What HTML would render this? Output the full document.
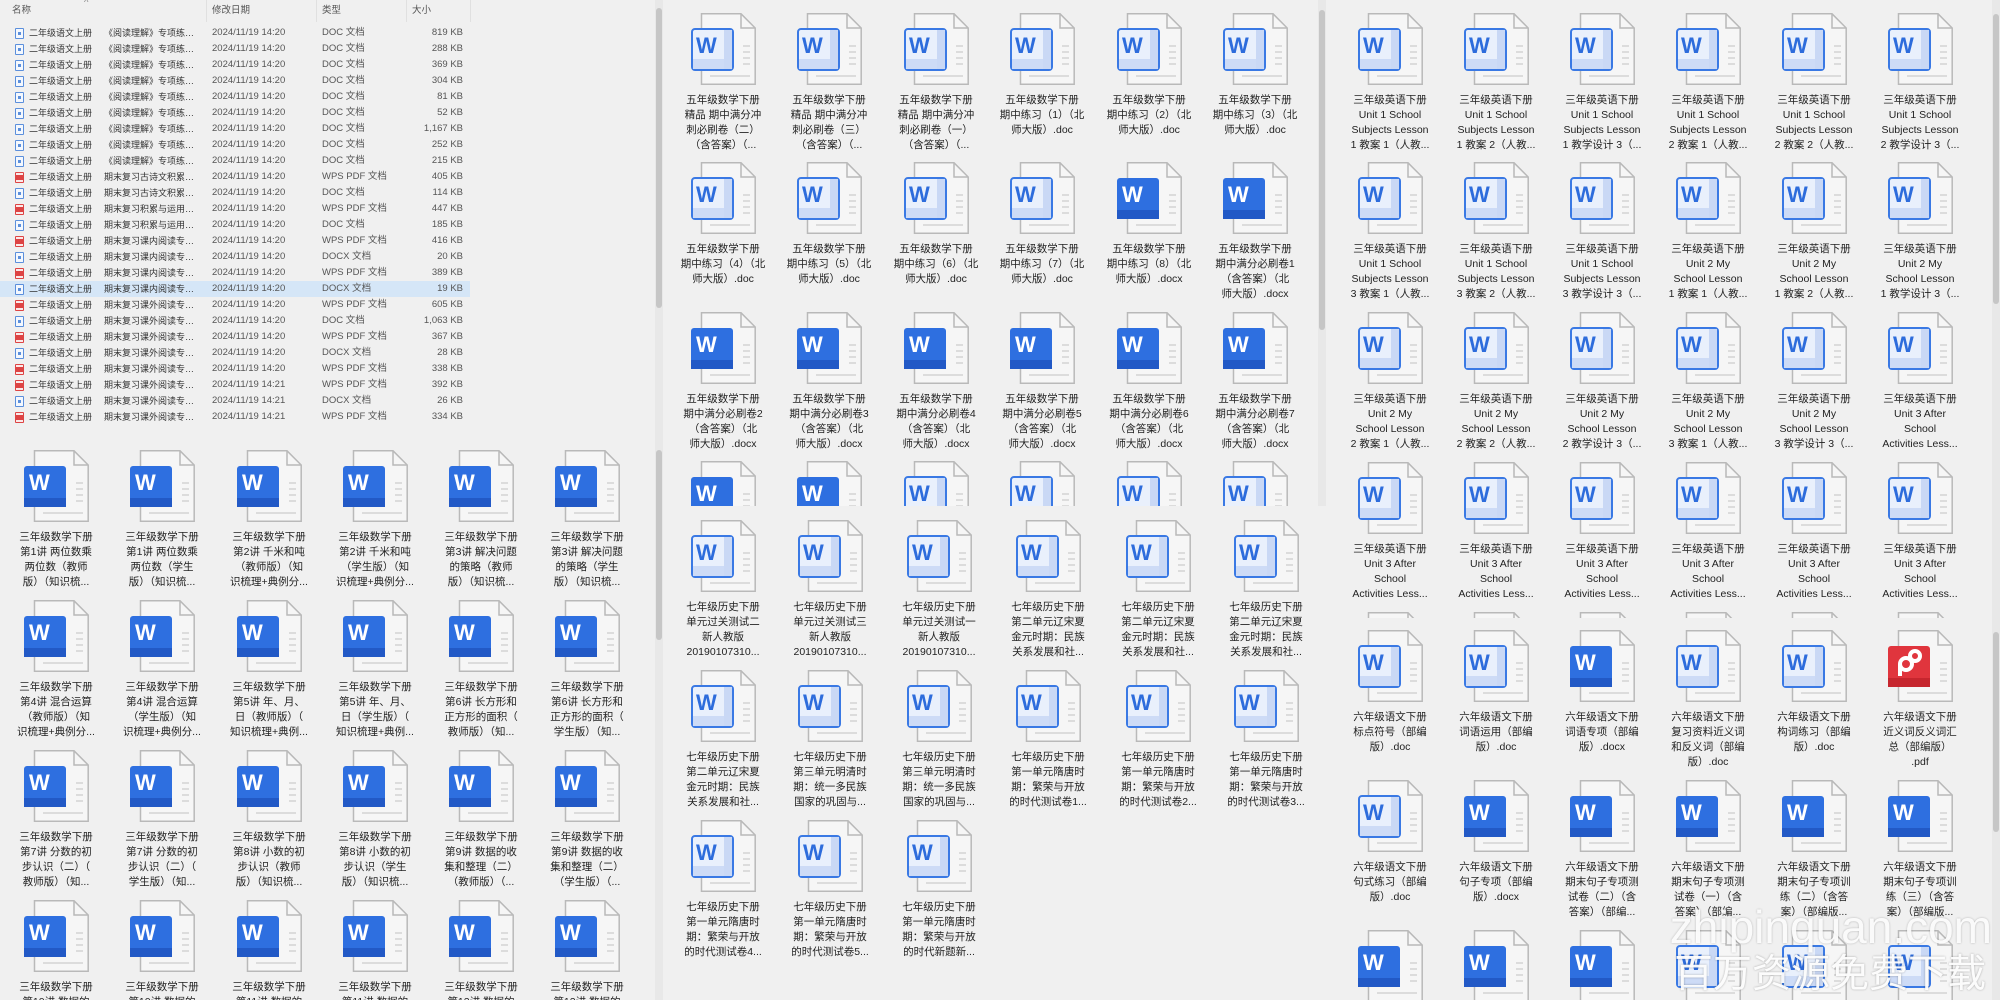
<!DOCTYPE html>
<html><head><meta charset="utf-8">
<style>
body{margin:0;width:2000px;height:1000px;background:#f0f0f0;font-family:"Liberation Sans","Noto Sans CJK SC",sans-serif;position:relative;overflow:hidden}
.pane{position:absolute;overflow:hidden;background:#f0f0f0}
.t{position:absolute;width:96px;text-align:center;font-size:10.5px;line-height:15px;color:#222}
.t svg{display:block;width:65px;height:72px;margin:0 auto 8px}
.t p{margin:0;white-space:nowrap}
.r{position:absolute;left:0;width:470px;height:16px;font-size:9.5px;line-height:16px;color:#555;white-space:nowrap}
.r span{position:absolute}
.r .n{left:29px;color:#333;font-size:9px}
.r .n2{left:104px;width:96px;overflow:hidden;text-overflow:ellipsis;color:#333;font-size:9px}
.r .d{left:212px}
.r .y{left:322px}
.r .s{right:7px}
.r i{position:absolute;left:15px;top:3px;width:7px;height:9px;border:1px solid #5b8fdc;border-radius:1px;background:#f4f8fe}
.r i:after{content:"";position:absolute;left:2px;top:3px;width:3px;height:3px;background:#5b8fdc}
.r i.p{border-color:#d44;background:#fbe9e9}
.r i.p:after{background:#d44;left:0;top:2px;width:7px;height:5px}
.sb{position:absolute;width:8px;background:#e8e8e8}
.th{position:absolute;left:1px;width:6px;background:#c6c6c6;border-radius:3px}
.hd{position:absolute;top:0;height:22px;font-size:9.5px;line-height:22px;color:#555}
.vl{position:absolute;top:0;width:1px;height:22px;background:#e0e0e0}
</style></head><body>
<svg width="0" height="0" style="position:absolute">
<defs>
<g id="pg">
<path d="M10.5 0.8H50L64.2 15V71.2H10.5Z" fill="#f6f6f6" stroke="#b9b9b9" stroke-width="1.5"/>
<path d="M50 0.8V15H64.2" fill="none" stroke="#b9b9b9" stroke-width="1.5"/>
<path d="M52 33H59M52 39H59M52 45H59M52 51H59M19 63H59" stroke="#dcdcdc" stroke-width="2"/>
</g>
<symbol id="wl" viewBox="0 0 65 72"><use href="#pg"/>
<rect x="1" y="16" width="41" height="41" rx="3" fill="#e9f0fc" stroke="#3a79e4" stroke-width="2"/>
<rect x="2" y="46" width="39" height="10" fill="#cddbf6"/>
<rect x="33" y="17" width="8" height="39" fill="#c9d8f5"/>
<text x="5" y="40" font-family="Liberation Sans" font-weight="bold" font-size="22" fill="#2d6cdc">W</text>
</symbol>
<symbol id="wd" viewBox="0 0 65 72"><use href="#pg"/>
<rect x="0" y="16" width="42" height="41" rx="3" fill="#2e6fe0"/>
<rect x="0" y="48" width="42" height="9" fill="#2259c6"/>
<text x="5" y="40" font-family="Liberation Sans" font-weight="bold" font-size="22" fill="#fff">W</text>
</symbol>
<symbol id="pd" viewBox="0 0 65 72"><use href="#pg"/>
<rect x="0" y="16" width="42" height="41" rx="3" fill="#e0353d"/>
<rect x="0" y="48" width="42" height="9" fill="#c6262e"/>
<circle cx="18" cy="34" r="6" fill="none" stroke="#fff" stroke-width="4"/>
<circle cx="27" cy="26" r="5" fill="none" stroke="#fff" stroke-width="4"/>
<path d="M12 34V46" stroke="#fff" stroke-width="4"/>
</symbol>
</defs></svg>

<!-- P1 list -->
<div class="pane" style="left:0;top:0;width:663px;height:442px">
<div class="hd" style="left:12px">名称</div><div class="hd" style="left:84px;top:-8px;color:#888">^</div>
<div class="hd" style="left:212px">修改日期</div><div class="hd" style="left:322px">类型</div><div class="hd" style="left:412px">大小</div>
<div class="vl" style="left:206px"></div><div class="vl" style="left:316px"></div><div class="vl" style="left:406px"></div><div class="vl" style="left:470px"></div>
<div class="r" style="top:25px"><i></i><span class="n">二年级语文上册</span><span class="n2">《阅读理解》专项练习...</span><span class="d">2024/11/19 14:20</span><span class="y">DOC 文档</span><span class="s">819 KB</span></div>
<div class="r" style="top:41px"><i></i><span class="n">二年级语文上册</span><span class="n2">《阅读理解》专项练习...</span><span class="d">2024/11/19 14:20</span><span class="y">DOC 文档</span><span class="s">288 KB</span></div>
<div class="r" style="top:57px"><i></i><span class="n">二年级语文上册</span><span class="n2">《阅读理解》专项练习...</span><span class="d">2024/11/19 14:20</span><span class="y">DOC 文档</span><span class="s">369 KB</span></div>
<div class="r" style="top:73px"><i></i><span class="n">二年级语文上册</span><span class="n2">《阅读理解》专项练习...</span><span class="d">2024/11/19 14:20</span><span class="y">DOC 文档</span><span class="s">304 KB</span></div>
<div class="r" style="top:89px"><i></i><span class="n">二年级语文上册</span><span class="n2">《阅读理解》专项练习...</span><span class="d">2024/11/19 14:20</span><span class="y">DOC 文档</span><span class="s">81 KB</span></div>
<div class="r" style="top:105px"><i></i><span class="n">二年级语文上册</span><span class="n2">《阅读理解》专项练习...</span><span class="d">2024/11/19 14:20</span><span class="y">DOC 文档</span><span class="s">52 KB</span></div>
<div class="r" style="top:121px"><i></i><span class="n">二年级语文上册</span><span class="n2">《阅读理解》专项练习...</span><span class="d">2024/11/19 14:20</span><span class="y">DOC 文档</span><span class="s">1,167 KB</span></div>
<div class="r" style="top:137px"><i></i><span class="n">二年级语文上册</span><span class="n2">《阅读理解》专项练习...</span><span class="d">2024/11/19 14:20</span><span class="y">DOC 文档</span><span class="s">252 KB</span></div>
<div class="r" style="top:153px"><i></i><span class="n">二年级语文上册</span><span class="n2">《阅读理解》专项练习...</span><span class="d">2024/11/19 14:20</span><span class="y">DOC 文档</span><span class="s">215 KB</span></div>
<div class="r" style="top:169px"><i class="p"></i><span class="n">二年级语文上册</span><span class="n2">期末复习古诗文积累专...</span><span class="d">2024/11/19 14:20</span><span class="y">WPS PDF 文档</span><span class="s">405 KB</span></div>
<div class="r" style="top:185px"><i></i><span class="n">二年级语文上册</span><span class="n2">期末复习古诗文积累专...</span><span class="d">2024/11/19 14:20</span><span class="y">DOC 文档</span><span class="s">114 KB</span></div>
<div class="r" style="top:201px"><i class="p"></i><span class="n">二年级语文上册</span><span class="n2">期末复习积累与运用专...</span><span class="d">2024/11/19 14:20</span><span class="y">WPS PDF 文档</span><span class="s">447 KB</span></div>
<div class="r" style="top:217px"><i></i><span class="n">二年级语文上册</span><span class="n2">期末复习积累与运用专...</span><span class="d">2024/11/19 14:20</span><span class="y">DOC 文档</span><span class="s">185 KB</span></div>
<div class="r" style="top:233px"><i class="p"></i><span class="n">二年级语文上册</span><span class="n2">期末复习课内阅读专项...</span><span class="d">2024/11/19 14:20</span><span class="y">WPS PDF 文档</span><span class="s">416 KB</span></div>
<div class="r" style="top:249px"><i></i><span class="n">二年级语文上册</span><span class="n2">期末复习课内阅读专项...</span><span class="d">2024/11/19 14:20</span><span class="y">DOCX 文档</span><span class="s">20 KB</span></div>
<div class="r" style="top:265px"><i class="p"></i><span class="n">二年级语文上册</span><span class="n2">期末复习课内阅读专项...</span><span class="d">2024/11/19 14:20</span><span class="y">WPS PDF 文档</span><span class="s">389 KB</span></div>
<div class="r" style="top:281px;background:#d5e6f7"><i></i><span class="n">二年级语文上册</span><span class="n2">期末复习课内阅读专项...</span><span class="d">2024/11/19 14:20</span><span class="y">DOCX 文档</span><span class="s">19 KB</span></div>
<div class="r" style="top:297px"><i class="p"></i><span class="n">二年级语文上册</span><span class="n2">期末复习课外阅读专项...</span><span class="d">2024/11/19 14:20</span><span class="y">WPS PDF 文档</span><span class="s">605 KB</span></div>
<div class="r" style="top:313px"><i></i><span class="n">二年级语文上册</span><span class="n2">期末复习课外阅读专项...</span><span class="d">2024/11/19 14:20</span><span class="y">DOC 文档</span><span class="s">1,063 KB</span></div>
<div class="r" style="top:329px"><i class="p"></i><span class="n">二年级语文上册</span><span class="n2">期末复习课外阅读专项...</span><span class="d">2024/11/19 14:20</span><span class="y">WPS PDF 文档</span><span class="s">367 KB</span></div>
<div class="r" style="top:345px"><i></i><span class="n">二年级语文上册</span><span class="n2">期末复习课外阅读专项...</span><span class="d">2024/11/19 14:20</span><span class="y">DOCX 文档</span><span class="s">28 KB</span></div>
<div class="r" style="top:361px"><i class="p"></i><span class="n">二年级语文上册</span><span class="n2">期末复习课外阅读专项...</span><span class="d">2024/11/19 14:20</span><span class="y">WPS PDF 文档</span><span class="s">338 KB</span></div>
<div class="r" style="top:377px"><i class="p"></i><span class="n">二年级语文上册</span><span class="n2">期末复习课外阅读专项...</span><span class="d">2024/11/19 14:21</span><span class="y">WPS PDF 文档</span><span class="s">392 KB</span></div>
<div class="r" style="top:393px"><i></i><span class="n">二年级语文上册</span><span class="n2">期末复习课外阅读专项...</span><span class="d">2024/11/19 14:21</span><span class="y">DOCX 文档</span><span class="s">26 KB</span></div>
<div class="r" style="top:409px"><i class="p"></i><span class="n">二年级语文上册</span><span class="n2">期末复习课外阅读专项...</span><span class="d">2024/11/19 14:21</span><span class="y">WPS PDF 文档</span><span class="s">334 KB</span></div>
<div class="sb" style="left:655px;top:0;height:442px"><div class="th" style="top:8px;height:300px"></div></div>
</div>

<!-- P2 left grid -->
<div class="pane" style="left:0;top:442px;width:663px;height:558px">
<div class="t" style="left:8px;top:8px"><svg><use href="#wd"/></svg><p>三年级数学下册<br>第1讲 两位数乘<br>两位数（教师<br>版）（知识梳...</p></div>
<div class="t" style="left:114px;top:8px"><svg><use href="#wd"/></svg><p>三年级数学下册<br>第1讲 两位数乘<br>两位数（学生<br>版）（知识梳...</p></div>
<div class="t" style="left:221px;top:8px"><svg><use href="#wd"/></svg><p>三年级数学下册<br>第2讲 千米和吨<br>（教师版）（知<br>识梳理+典例分...</p></div>
<div class="t" style="left:327px;top:8px"><svg><use href="#wd"/></svg><p>三年级数学下册<br>第2讲 千米和吨<br>（学生版）（知<br>识梳理+典例分...</p></div>
<div class="t" style="left:433px;top:8px"><svg><use href="#wd"/></svg><p>三年级数学下册<br>第3讲 解决问题<br>的策略（教师<br>版）（知识梳...</p></div>
<div class="t" style="left:539px;top:8px"><svg><use href="#wd"/></svg><p>三年级数学下册<br>第3讲 解决问题<br>的策略（学生<br>版）（知识梳...</p></div>
<div class="t" style="left:8px;top:158px"><svg><use href="#wd"/></svg><p>三年级数学下册<br>第4讲 混合运算<br>（教师版）（知<br>识梳理+典例分...</p></div>
<div class="t" style="left:114px;top:158px"><svg><use href="#wd"/></svg><p>三年级数学下册<br>第4讲 混合运算<br>（学生版）（知<br>识梳理+典例分...</p></div>
<div class="t" style="left:221px;top:158px"><svg><use href="#wd"/></svg><p>三年级数学下册<br>第5讲 年、月、<br>日（教师版）（<br>知识梳理+典例...</p></div>
<div class="t" style="left:327px;top:158px"><svg><use href="#wd"/></svg><p>三年级数学下册<br>第5讲 年、月、<br>日（学生版）（<br>知识梳理+典例...</p></div>
<div class="t" style="left:433px;top:158px"><svg><use href="#wd"/></svg><p>三年级数学下册<br>第6讲 长方形和<br>正方形的面积（<br>教师版）（知...</p></div>
<div class="t" style="left:539px;top:158px"><svg><use href="#wd"/></svg><p>三年级数学下册<br>第6讲 长方形和<br>正方形的面积（<br>学生版）（知...</p></div>
<div class="t" style="left:8px;top:308px"><svg><use href="#wd"/></svg><p>三年级数学下册<br>第7讲 分数的初<br>步认识（二）（<br>教师版）（知...</p></div>
<div class="t" style="left:114px;top:308px"><svg><use href="#wd"/></svg><p>三年级数学下册<br>第7讲 分数的初<br>步认识（二）（<br>学生版）（知...</p></div>
<div class="t" style="left:221px;top:308px"><svg><use href="#wd"/></svg><p>三年级数学下册<br>第8讲 小数的初<br>步认识（教师<br>版）（知识梳...</p></div>
<div class="t" style="left:327px;top:308px"><svg><use href="#wd"/></svg><p>三年级数学下册<br>第8讲 小数的初<br>步认识（学生<br>版）（知识梳...</p></div>
<div class="t" style="left:433px;top:308px"><svg><use href="#wd"/></svg><p>三年级数学下册<br>第9讲 数据的收<br>集和整理（二）<br>（教师版）（...</p></div>
<div class="t" style="left:539px;top:308px"><svg><use href="#wd"/></svg><p>三年级数学下册<br>第9讲 数据的收<br>集和整理（二）<br>（学生版）（...</p></div>
<div class="t" style="left:8px;top:458px"><svg><use href="#wd"/></svg><p>三年级数学下册<br>第10讲 数据的</p></div>
<div class="t" style="left:114px;top:458px"><svg><use href="#wd"/></svg><p>三年级数学下册<br>第10讲 数据的</p></div>
<div class="t" style="left:221px;top:458px"><svg><use href="#wd"/></svg><p>三年级数学下册<br>第11讲 数据的</p></div>
<div class="t" style="left:327px;top:458px"><svg><use href="#wd"/></svg><p>三年级数学下册<br>第11讲 数据的</p></div>
<div class="t" style="left:433px;top:458px"><svg><use href="#wd"/></svg><p>三年级数学下册<br>第12讲 数据的</p></div>
<div class="t" style="left:539px;top:458px"><svg><use href="#wd"/></svg><p>三年级数学下册<br>第12讲 数据的</p></div>
<div class="sb" style="left:655px;top:0;height:558px"><div class="th" style="top:8px;height:190px"></div></div>
</div>

<!-- P3 middle top -->
<div class="pane" style="left:663px;top:0;width:663px;height:506px">
<div class="t" style="left:12px;top:13px"><svg><use href="#wl"/></svg><p>五年级数学下册<br>精品 期中满分冲<br>刺必刷卷（二）<br>（含答案）（...</p></div>
<div class="t" style="left:118px;top:13px"><svg><use href="#wl"/></svg><p>五年级数学下册<br>精品 期中满分冲<br>刺必刷卷（三）<br>（含答案）（...</p></div>
<div class="t" style="left:225px;top:13px"><svg><use href="#wl"/></svg><p>五年级数学下册<br>精品 期中满分冲<br>刺必刷卷（一）<br>（含答案）（...</p></div>
<div class="t" style="left:331px;top:13px"><svg><use href="#wl"/></svg><p>五年级数学下册<br>期中练习（1）（北<br>师大版）.doc</p></div>
<div class="t" style="left:438px;top:13px"><svg><use href="#wl"/></svg><p>五年级数学下册<br>期中练习（2）（北<br>师大版）.doc</p></div>
<div class="t" style="left:544px;top:13px"><svg><use href="#wl"/></svg><p>五年级数学下册<br>期中练习（3）（北<br>师大版）.doc</p></div>
<div class="t" style="left:12px;top:162px"><svg><use href="#wl"/></svg><p>五年级数学下册<br>期中练习（4）（北<br>师大版）.doc</p></div>
<div class="t" style="left:118px;top:162px"><svg><use href="#wl"/></svg><p>五年级数学下册<br>期中练习（5）（北<br>师大版）.doc</p></div>
<div class="t" style="left:225px;top:162px"><svg><use href="#wl"/></svg><p>五年级数学下册<br>期中练习（6）（北<br>师大版）.doc</p></div>
<div class="t" style="left:331px;top:162px"><svg><use href="#wl"/></svg><p>五年级数学下册<br>期中练习（7）（北<br>师大版）.doc</p></div>
<div class="t" style="left:438px;top:162px"><svg><use href="#wd"/></svg><p>五年级数学下册<br>期中练习（8）（北<br>师大版）.docx</p></div>
<div class="t" style="left:544px;top:162px"><svg><use href="#wd"/></svg><p>五年级数学下册<br>期中满分必刷卷1<br>（含答案）（北<br>师大版）.docx</p></div>
<div class="t" style="left:12px;top:312px"><svg><use href="#wd"/></svg><p>五年级数学下册<br>期中满分必刷卷2<br>（含答案）（北<br>师大版）.docx</p></div>
<div class="t" style="left:118px;top:312px"><svg><use href="#wd"/></svg><p>五年级数学下册<br>期中满分必刷卷3<br>（含答案）（北<br>师大版）.docx</p></div>
<div class="t" style="left:225px;top:312px"><svg><use href="#wd"/></svg><p>五年级数学下册<br>期中满分必刷卷4<br>（含答案）（北<br>师大版）.docx</p></div>
<div class="t" style="left:331px;top:312px"><svg><use href="#wd"/></svg><p>五年级数学下册<br>期中满分必刷卷5<br>（含答案）（北<br>师大版）.docx</p></div>
<div class="t" style="left:438px;top:312px"><svg><use href="#wd"/></svg><p>五年级数学下册<br>期中满分必刷卷6<br>（含答案）（北<br>师大版）.docx</p></div>
<div class="t" style="left:544px;top:312px"><svg><use href="#wd"/></svg><p>五年级数学下册<br>期中满分必刷卷7<br>（含答案）（北<br>师大版）.docx</p></div>
<div class="t" style="left:12px;top:461px"><svg><use href="#wd"/></svg></div>
<div class="t" style="left:118px;top:461px"><svg><use href="#wd"/></svg></div>
<div class="t" style="left:225px;top:461px"><svg><use href="#wl"/></svg></div>
<div class="t" style="left:331px;top:461px"><svg><use href="#wl"/></svg></div>
<div class="t" style="left:438px;top:461px"><svg><use href="#wl"/></svg></div>
<div class="t" style="left:544px;top:461px"><svg><use href="#wl"/></svg></div>
<div class="sb" style="left:655px;top:0;height:506px"><div class="th" style="top:10px;height:320px"></div></div>
</div>

<!-- P4 middle bottom -->
<div class="pane" style="left:663px;top:506px;width:663px;height:494px">
<div class="t" style="left:12px;top:14px"><svg><use href="#wl"/></svg><p>七年级历史下册<br>单元过关测试二<br>新人教版<br>20190107310...</p></div>
<div class="t" style="left:119px;top:14px"><svg><use href="#wl"/></svg><p>七年级历史下册<br>单元过关测试三<br>新人教版<br>20190107310...</p></div>
<div class="t" style="left:228px;top:14px"><svg><use href="#wl"/></svg><p>七年级历史下册<br>单元过关测试一<br>新人教版<br>20190107310...</p></div>
<div class="t" style="left:337px;top:14px"><svg><use href="#wl"/></svg><p>七年级历史下册<br>第二单元辽宋夏<br>金元时期：民族<br>关系发展和社...</p></div>
<div class="t" style="left:447px;top:14px"><svg><use href="#wl"/></svg><p>七年级历史下册<br>第二单元辽宋夏<br>金元时期：民族<br>关系发展和社...</p></div>
<div class="t" style="left:555px;top:14px"><svg><use href="#wl"/></svg><p>七年级历史下册<br>第二单元辽宋夏<br>金元时期：民族<br>关系发展和社...</p></div>
<div class="t" style="left:12px;top:164px"><svg><use href="#wl"/></svg><p>七年级历史下册<br>第二单元辽宋夏<br>金元时期：民族<br>关系发展和社...</p></div>
<div class="t" style="left:119px;top:164px"><svg><use href="#wl"/></svg><p>七年级历史下册<br>第三单元明清时<br>期：统一多民族<br>国家的巩固与...</p></div>
<div class="t" style="left:228px;top:164px"><svg><use href="#wl"/></svg><p>七年级历史下册<br>第三单元明清时<br>期：统一多民族<br>国家的巩固与...</p></div>
<div class="t" style="left:337px;top:164px"><svg><use href="#wl"/></svg><p>七年级历史下册<br>第一单元隋唐时<br>期：繁荣与开放<br>的时代测试卷1...</p></div>
<div class="t" style="left:447px;top:164px"><svg><use href="#wl"/></svg><p>七年级历史下册<br>第一单元隋唐时<br>期：繁荣与开放<br>的时代测试卷2...</p></div>
<div class="t" style="left:555px;top:164px"><svg><use href="#wl"/></svg><p>七年级历史下册<br>第一单元隋唐时<br>期：繁荣与开放<br>的时代测试卷3...</p></div>
<div class="t" style="left:12px;top:314px"><svg><use href="#wl"/></svg><p>七年级历史下册<br>第一单元隋唐时<br>期：繁荣与开放<br>的时代测试卷4...</p></div>
<div class="t" style="left:119px;top:314px"><svg><use href="#wl"/></svg><p>七年级历史下册<br>第一单元隋唐时<br>期：繁荣与开放<br>的时代测试卷5...</p></div>
<div class="t" style="left:228px;top:314px"><svg><use href="#wl"/></svg><p>七年级历史下册<br>第一单元隋唐时<br>期：繁荣与开放<br>的时代新题新...</p></div>
</div>

<!-- P5 right top -->
<div class="pane" style="left:1326px;top:0;width:674px;height:618px">
<div class="t" style="left:16px;top:13px"><svg><use href="#wl"/></svg><p>三年级英语下册<br>Unit 1 School<br>Subjects Lesson<br>1 教案 1（人教...</p></div>
<div class="t" style="left:122px;top:13px"><svg><use href="#wl"/></svg><p>三年级英语下册<br>Unit 1 School<br>Subjects Lesson<br>1 教案 2（人教...</p></div>
<div class="t" style="left:228px;top:13px"><svg><use href="#wl"/></svg><p>三年级英语下册<br>Unit 1 School<br>Subjects Lesson<br>1 教学设计 3（...</p></div>
<div class="t" style="left:334px;top:13px"><svg><use href="#wl"/></svg><p>三年级英语下册<br>Unit 1 School<br>Subjects Lesson<br>2 教案 1（人教...</p></div>
<div class="t" style="left:440px;top:13px"><svg><use href="#wl"/></svg><p>三年级英语下册<br>Unit 1 School<br>Subjects Lesson<br>2 教案 2（人教...</p></div>
<div class="t" style="left:546px;top:13px"><svg><use href="#wl"/></svg><p>三年级英语下册<br>Unit 1 School<br>Subjects Lesson<br>2 教学设计 3（...</p></div>
<div class="t" style="left:16px;top:162px"><svg><use href="#wl"/></svg><p>三年级英语下册<br>Unit 1 School<br>Subjects Lesson<br>3 教案 1（人教...</p></div>
<div class="t" style="left:122px;top:162px"><svg><use href="#wl"/></svg><p>三年级英语下册<br>Unit 1 School<br>Subjects Lesson<br>3 教案 2（人教...</p></div>
<div class="t" style="left:228px;top:162px"><svg><use href="#wl"/></svg><p>三年级英语下册<br>Unit 1 School<br>Subjects Lesson<br>3 教学设计 3（...</p></div>
<div class="t" style="left:334px;top:162px"><svg><use href="#wl"/></svg><p>三年级英语下册<br>Unit 2 My<br>School Lesson<br>1 教案 1（人教...</p></div>
<div class="t" style="left:440px;top:162px"><svg><use href="#wl"/></svg><p>三年级英语下册<br>Unit 2 My<br>School Lesson<br>1 教案 2（人教...</p></div>
<div class="t" style="left:546px;top:162px"><svg><use href="#wl"/></svg><p>三年级英语下册<br>Unit 2 My<br>School Lesson<br>1 教学设计 3（...</p></div>
<div class="t" style="left:16px;top:312px"><svg><use href="#wl"/></svg><p>三年级英语下册<br>Unit 2 My<br>School Lesson<br>2 教案 1（人教...</p></div>
<div class="t" style="left:122px;top:312px"><svg><use href="#wl"/></svg><p>三年级英语下册<br>Unit 2 My<br>School Lesson<br>2 教案 2（人教...</p></div>
<div class="t" style="left:228px;top:312px"><svg><use href="#wl"/></svg><p>三年级英语下册<br>Unit 2 My<br>School Lesson<br>2 教学设计 3（...</p></div>
<div class="t" style="left:334px;top:312px"><svg><use href="#wl"/></svg><p>三年级英语下册<br>Unit 2 My<br>School Lesson<br>3 教案 1（人教...</p></div>
<div class="t" style="left:440px;top:312px"><svg><use href="#wl"/></svg><p>三年级英语下册<br>Unit 2 My<br>School Lesson<br>3 教学设计 3（...</p></div>
<div class="t" style="left:546px;top:312px"><svg><use href="#wl"/></svg><p>三年级英语下册<br>Unit 3 After<br>School<br>Activities Less...</p></div>
<div class="t" style="left:16px;top:462px"><svg><use href="#wl"/></svg><p>三年级英语下册<br>Unit 3 After<br>School<br>Activities Less...</p></div>
<div class="t" style="left:122px;top:462px"><svg><use href="#wl"/></svg><p>三年级英语下册<br>Unit 3 After<br>School<br>Activities Less...</p></div>
<div class="t" style="left:228px;top:462px"><svg><use href="#wl"/></svg><p>三年级英语下册<br>Unit 3 After<br>School<br>Activities Less...</p></div>
<div class="t" style="left:334px;top:462px"><svg><use href="#wl"/></svg><p>三年级英语下册<br>Unit 3 After<br>School<br>Activities Less...</p></div>
<div class="t" style="left:440px;top:462px"><svg><use href="#wl"/></svg><p>三年级英语下册<br>Unit 3 After<br>School<br>Activities Less...</p></div>
<div class="t" style="left:546px;top:462px"><svg><use href="#wl"/></svg><p>三年级英语下册<br>Unit 3 After<br>School<br>Activities Less...</p></div>
<div class="t" style="left:16px;top:612px"><svg><use href="#wl"/></svg></div>
<div class="t" style="left:122px;top:612px"><svg><use href="#wl"/></svg></div>
<div class="t" style="left:228px;top:612px"><svg><use href="#wl"/></svg></div>
<div class="t" style="left:334px;top:612px"><svg><use href="#wl"/></svg></div>
<div class="t" style="left:440px;top:612px"><svg><use href="#wl"/></svg></div>
<div class="t" style="left:546px;top:612px"><svg><use href="#wl"/></svg></div>
<div class="sb" style="left:666px;top:0;height:618px"><div class="th" style="top:14px;height:290px"></div></div>
</div>

<!-- P6 right bottom -->
<div class="pane" style="left:1326px;top:618px;width:674px;height:382px">
<div class="t" style="left:16px;top:12px"><svg><use href="#wl"/></svg><p>六年级语文下册<br>标点符号（部编<br>版）.doc</p></div>
<div class="t" style="left:122px;top:12px"><svg><use href="#wl"/></svg><p>六年级语文下册<br>词语运用（部编<br>版）.doc</p></div>
<div class="t" style="left:228px;top:12px"><svg><use href="#wd"/></svg><p>六年级语文下册<br>词语专项（部编<br>版）.docx</p></div>
<div class="t" style="left:334px;top:12px"><svg><use href="#wl"/></svg><p>六年级语文下册<br>复习资料近义词<br>和反义词（部编<br>版）.doc</p></div>
<div class="t" style="left:440px;top:12px"><svg><use href="#wl"/></svg><p>六年级语文下册<br>构词练习（部编<br>版）.doc</p></div>
<div class="t" style="left:546px;top:12px"><svg><use href="#pd"/></svg><p>六年级语文下册<br>近义词反义词汇<br>总（部编版）<br>.pdf</p></div>
<div class="t" style="left:16px;top:162px"><svg><use href="#wl"/></svg><p>六年级语文下册<br>句式练习（部编<br>版）.doc</p></div>
<div class="t" style="left:122px;top:162px"><svg><use href="#wd"/></svg><p>六年级语文下册<br>句子专项（部编<br>版）.docx</p></div>
<div class="t" style="left:228px;top:162px"><svg><use href="#wd"/></svg><p>六年级语文下册<br>期末句子专项测<br>试卷（二）（含<br>答案）（部编...</p></div>
<div class="t" style="left:334px;top:162px"><svg><use href="#wd"/></svg><p>六年级语文下册<br>期末句子专项测<br>试卷（一）（含<br>答案）（部编...</p></div>
<div class="t" style="left:440px;top:162px"><svg><use href="#wd"/></svg><p>六年级语文下册<br>期末句子专项训<br>练（二）（含答<br>案）（部编版...</p></div>
<div class="t" style="left:546px;top:162px"><svg><use href="#wd"/></svg><p>六年级语文下册<br>期末句子专项训<br>练（三）（含答<br>案）（部编版...</p></div>
<div class="t" style="left:16px;top:312px"><svg><use href="#wd"/></svg></div>
<div class="t" style="left:122px;top:312px"><svg><use href="#wd"/></svg></div>
<div class="t" style="left:228px;top:312px"><svg><use href="#wd"/></svg></div>
<div class="t" style="left:334px;top:312px"><svg><use href="#wl"/></svg></div>
<div class="t" style="left:440px;top:312px"><svg><use href="#wl"/></svg></div>
<div class="t" style="left:546px;top:312px"><svg><use href="#wl"/></svg></div>
<div class="sb" style="left:666px;top:0;height:382px"><div class="th" style="top:14px;height:200px"></div></div>
</div>

<!-- watermark -->
<div style="position:absolute;right:8px;top:900px;font-family:'Liberation Sans',sans-serif;font-size:46px;line-height:54px;color:rgba(255,255,255,0.92);text-shadow:0 0 2px rgba(0,0,0,0.25);white-space:nowrap">zhipinquan.com</div>
<div style="position:absolute;left:1674px;top:952px;font-family:'Liberation Sans','Noto Sans CJK SC',sans-serif;font-size:39px;line-height:46px;color:rgba(255,255,255,0.95);text-shadow:0 0 2px rgba(0,0,0,0.3);white-space:nowrap">百万资源免费下载</div>
</body></html>
